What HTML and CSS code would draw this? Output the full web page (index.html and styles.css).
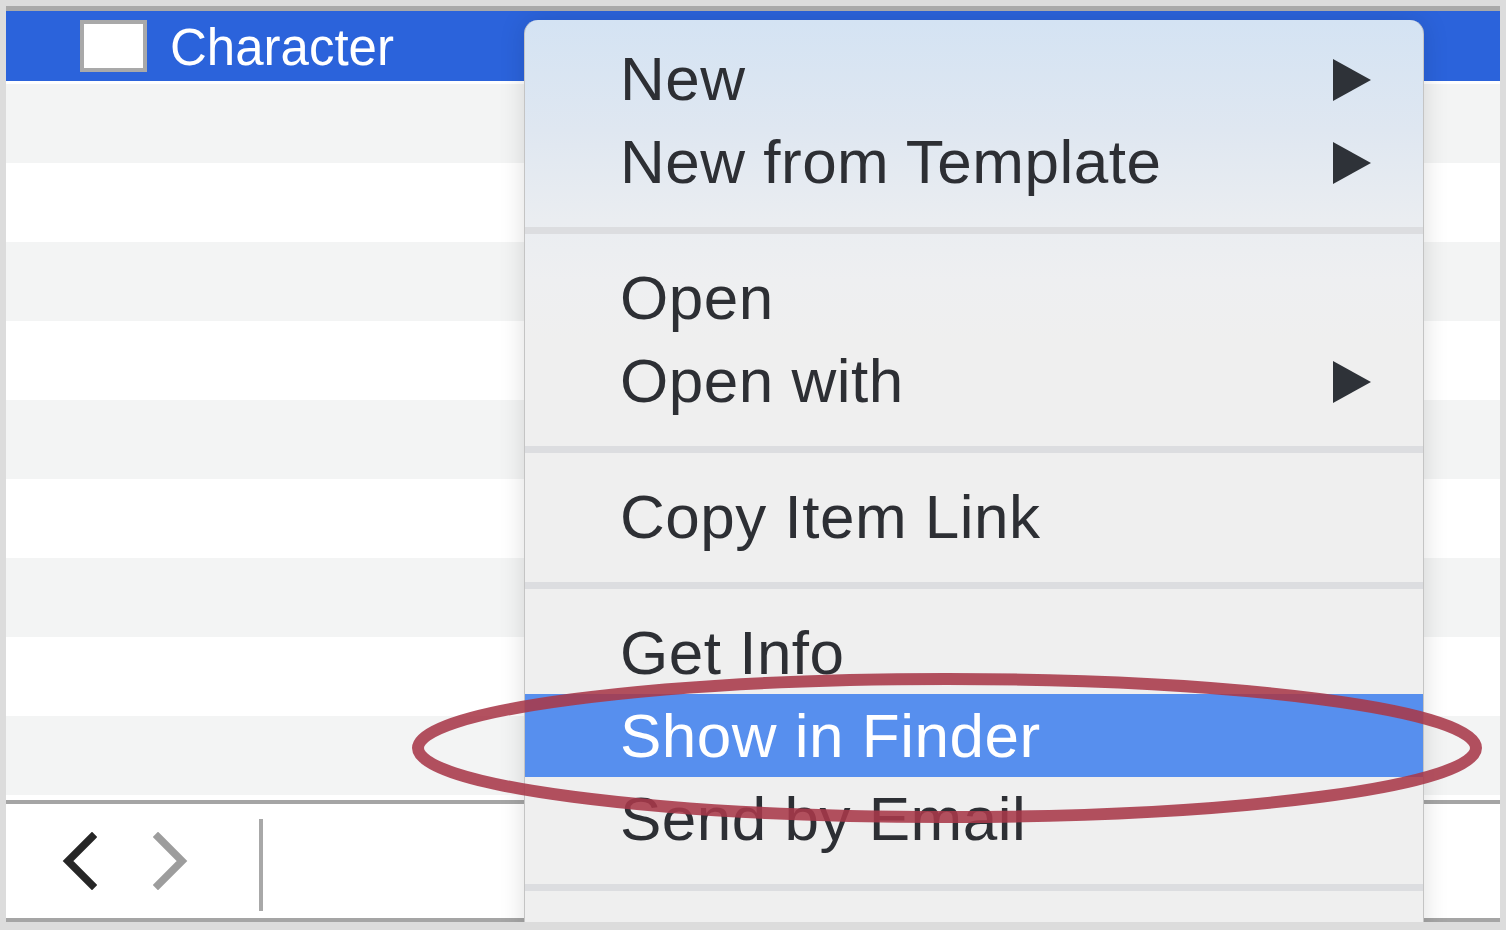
FILE: index.html
```html
<!DOCTYPE html>
<html>
<head>
<meta charset="utf-8">
<link rel="stylesheet" href="styles.css">
</head>
<body>
<div class="frame">
  <div class="selected-row">
    <span class="checkbox"></span>
    <span class="row-title">Character</span>
  </div>
  <div class="stripes">
    <div class="stripe odd"></div>
    <div class="stripe"></div>
    <div class="stripe odd"></div>
    <div class="stripe"></div>
    <div class="stripe odd"></div>
    <div class="stripe"></div>
    <div class="stripe odd"></div>
    <div class="stripe"></div>
    <div class="stripe odd"></div>
  </div>
  <div class="toolbar">
    <svg class="chev" width="36" height="58" viewBox="0 0 36 58"><path d="M31 5 L7 29 L31 53" fill="none" stroke="#262626" stroke-width="7.5" stroke-linecap="square"/></svg>
    <svg class="chev chev-next" width="36" height="58" viewBox="0 0 36 58"><path d="M5 5 L29 29 L5 53" fill="none" stroke="#9d9d9d" stroke-width="7.5" stroke-linecap="square"/></svg>
    <span class="divider"></span>
  </div>

  <div class="menu">
    <div class="section first">
      <div class="item"><span>New</span><span class="arrow"></span></div>
      <div class="item"><span>New from Template</span><span class="arrow"></span></div>
    </div>
    <div class="sep"></div>
    <div class="section">
      <div class="item"><span>Open</span></div>
      <div class="item"><span>Open with</span><span class="arrow"></span></div>
    </div>
    <div class="sep"></div>
    <div class="section">
      <div class="item"><span>Copy Item Link</span></div>
    </div>
    <div class="sep"></div>
    <div class="section">
      <div class="item"><span>Get Info</span></div>
      <div class="item active"><span>Show in Finder</span></div>
      <div class="item"><span>Send by Email</span></div>
    </div>
    <div class="sep"></div>
  </div>
</div>
<svg class="annotation" width="1506" height="930" viewBox="0 0 1506 930">
  <defs><filter id="soft"><feGaussianBlur stdDeviation="0.7"/></filter></defs>
  <ellipse cx="947" cy="748" rx="529" ry="69" fill="none" stroke="#a8384a" stroke-opacity="0.88" stroke-width="12" filter="url(#soft)"/>
</svg>
</body>
</html>
```
FILE: styles.css
```css
html, body {
  margin: 0;
  padding: 0;
}
body {
  width: 1506px;
  height: 930px;
  overflow: hidden;
  background: #dcdcdc;
  font-family: "Liberation Sans", Arial, sans-serif;
  position: relative;
}
.frame {
  position: relative;
  margin: 6px 6px 0 6px;
  width: 1494px;
  height: 916px;
  overflow: hidden;
  border-top: 5px solid #a9a9a9;
  box-sizing: border-box;
  background: #fff;
}
.selected-row {
  height: 70px;
  background: #2b63db;
  border-bottom: 3px solid #fff;
  display: flex;
  align-items: center;
  padding-left: 74px;
  box-sizing: content-box;
}
.checkbox {
  width: 59px;
  height: 44px;
  background: #fff;
  border: 4px solid #a9a9a9;
  margin-right: 23px;
}
.row-title {
  color: #fff;
  font-size: 51px;
  line-height: 70px;
  padding-top: 3px;
}
.stripes {
  display: flex;
  flex-direction: column;
  padding-bottom: 5px;
  border-bottom: 4px solid #a5a5a5;
}
.stripe {
  height: 79px;
  background: #fff;
}
.stripe.odd {
  background: #f3f4f4;
}
.toolbar {
  height: 114px;
  border-bottom: 4px solid #a5a5a5;
  display: flex;
  align-items: center;
  padding-left: 55px;
  background: #fff;
}
.chev {
  display: block;
}
.chev-next {
  margin-left: 56px;
}
.divider {
  width: 4px;
  height: 92px;
  background: #a8a8a8;
  margin-left: 70px;
  margin-top: 8px;
}
.menu {
  position: absolute;
  left: 518px;
  top: 9px;
  width: 898px;
  height: 960px;
  border-radius: 14px 14px 0 0;
  background: linear-gradient(to bottom, #d4e3f3 0px, #dfe7f1 110px, #eaedf1 200px, #eeeff1 260px, #efefef 320px, #efefef 100%);
  border-left: 1px solid #c4c4c4;
  border-right: 1px solid #c4c4c4;
  box-shadow: 0 0 26px rgba(0, 0, 0, 0.13);
  color: #2d2f34;
  font-size: 62px;
  letter-spacing: 0.5px;
}
.section.first {
  padding-top: 17px;
}
.item {
  height: 83px;
  line-height: 83px;
  padding-left: 95px;
  padding-right: 52px;
  display: flex;
  align-items: center;
  justify-content: space-between;
  white-space: nowrap;
}
.item.active {
  background: #578fee;
  color: #fff;
}
.arrow {
  width: 0;
  height: 0;
  border-top: 21px solid transparent;
  border-bottom: 21px solid transparent;
  border-left: 38px solid #2e3238;
  margin-top: 3px;
}
.sep {
  height: 7px;
  background: #dcdde0;
  margin: 24px 0 22px;
}
.annotation {
  position: absolute;
  left: 0;
  top: 0;
  pointer-events: none;
}
```
